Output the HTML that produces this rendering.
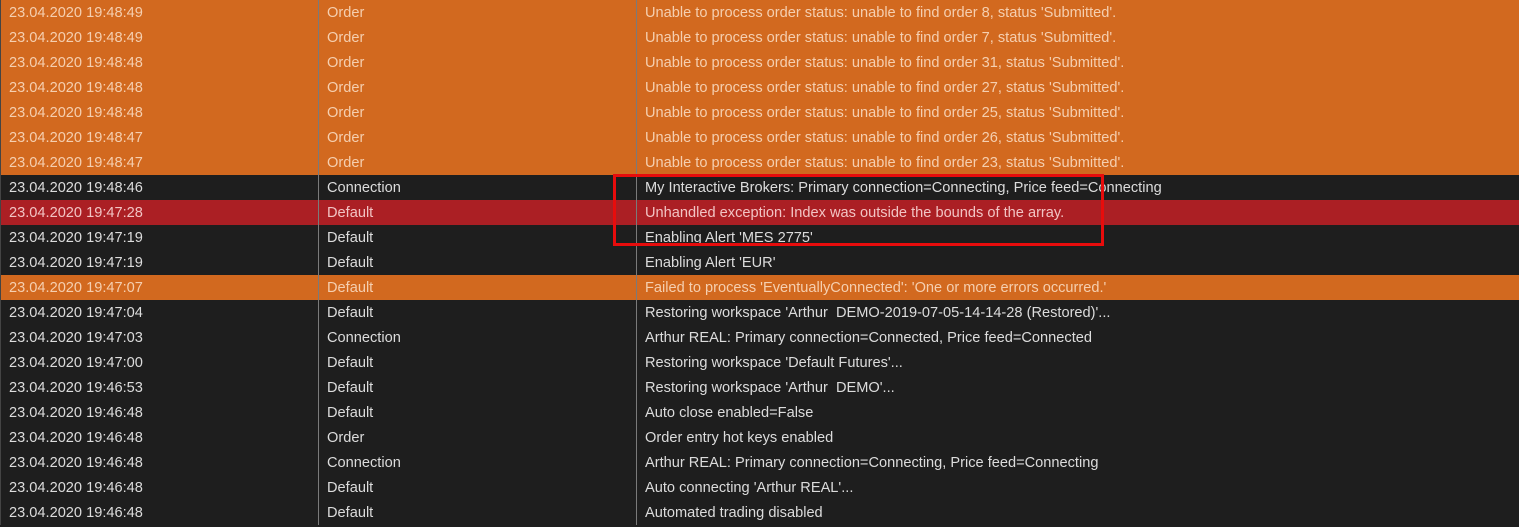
<!DOCTYPE html><html><head><style>
body{margin:0;width:1519px;height:520px;overflow:hidden;background:#1e1e1e;font-family:"Liberation Sans",Arial,sans-serif;font-size:14.6px;position:relative}
.r{height:25px;display:flex;line-height:27px;color:#dcdcdc;background:#1e1e1e}
.r.o{background:#d2691f;color:#f5cfb0}
.r.e{background:#ab1f24;color:#f2c4c4}
.r div{box-sizing:border-box;padding-left:8px;white-space:pre}
.c1{width:318px;border-left:1px solid #444}
.c2{width:318px;border-left:1px solid #7a7a7a}
.c3{flex:1;border-left:1px solid #7a7a7a}
.box{position:absolute;left:613px;top:174px;width:485px;height:66px;border:3px solid #e80c0c}
</style></head><body>
<div class="r o"><div class="c1">23.04.2020 19:48:49</div><div class="c2">Order</div><div class="c3">Unable to process order status: unable to find order 8, status 'Submitted'.</div></div>
<div class="r o"><div class="c1">23.04.2020 19:48:49</div><div class="c2">Order</div><div class="c3">Unable to process order status: unable to find order 7, status 'Submitted'.</div></div>
<div class="r o"><div class="c1">23.04.2020 19:48:48</div><div class="c2">Order</div><div class="c3">Unable to process order status: unable to find order 31, status 'Submitted'.</div></div>
<div class="r o"><div class="c1">23.04.2020 19:48:48</div><div class="c2">Order</div><div class="c3">Unable to process order status: unable to find order 27, status 'Submitted'.</div></div>
<div class="r o"><div class="c1">23.04.2020 19:48:48</div><div class="c2">Order</div><div class="c3">Unable to process order status: unable to find order 25, status 'Submitted'.</div></div>
<div class="r o"><div class="c1">23.04.2020 19:48:47</div><div class="c2">Order</div><div class="c3">Unable to process order status: unable to find order 26, status 'Submitted'.</div></div>
<div class="r o"><div class="c1">23.04.2020 19:48:47</div><div class="c2">Order</div><div class="c3">Unable to process order status: unable to find order 23, status 'Submitted'.</div></div>
<div class="r"><div class="c1">23.04.2020 19:48:46</div><div class="c2">Connection</div><div class="c3">My Interactive Brokers: Primary connection=Connecting, Price feed=Connecting</div></div>
<div class="r e"><div class="c1">23.04.2020 19:47:28</div><div class="c2">Default</div><div class="c3">Unhandled exception: Index was outside the bounds of the array.</div></div>
<div class="r"><div class="c1">23.04.2020 19:47:19</div><div class="c2">Default</div><div class="c3">Enabling Alert 'MES 2775'</div></div>
<div class="r"><div class="c1">23.04.2020 19:47:19</div><div class="c2">Default</div><div class="c3">Enabling Alert 'EUR'</div></div>
<div class="r o"><div class="c1">23.04.2020 19:47:07</div><div class="c2">Default</div><div class="c3">Failed to process 'EventuallyConnected': 'One or more errors occurred.'</div></div>
<div class="r"><div class="c1">23.04.2020 19:47:04</div><div class="c2">Default</div><div class="c3">Restoring workspace 'Arthur  DEMO-2019-07-05-14-14-28 (Restored)'...</div></div>
<div class="r"><div class="c1">23.04.2020 19:47:03</div><div class="c2">Connection</div><div class="c3">Arthur REAL: Primary connection=Connected, Price feed=Connected</div></div>
<div class="r"><div class="c1">23.04.2020 19:47:00</div><div class="c2">Default</div><div class="c3">Restoring workspace 'Default Futures'...</div></div>
<div class="r"><div class="c1">23.04.2020 19:46:53</div><div class="c2">Default</div><div class="c3">Restoring workspace 'Arthur  DEMO'...</div></div>
<div class="r"><div class="c1">23.04.2020 19:46:48</div><div class="c2">Default</div><div class="c3">Auto close enabled=False</div></div>
<div class="r"><div class="c1">23.04.2020 19:46:48</div><div class="c2">Order</div><div class="c3">Order entry hot keys enabled</div></div>
<div class="r"><div class="c1">23.04.2020 19:46:48</div><div class="c2">Connection</div><div class="c3">Arthur REAL: Primary connection=Connecting, Price feed=Connecting</div></div>
<div class="r"><div class="c1">23.04.2020 19:46:48</div><div class="c2">Default</div><div class="c3">Auto connecting 'Arthur REAL'...</div></div>
<div class="r"><div class="c1">23.04.2020 19:46:48</div><div class="c2">Default</div><div class="c3">Automated trading disabled</div></div>
<div class="box"></div>
</body></html>
